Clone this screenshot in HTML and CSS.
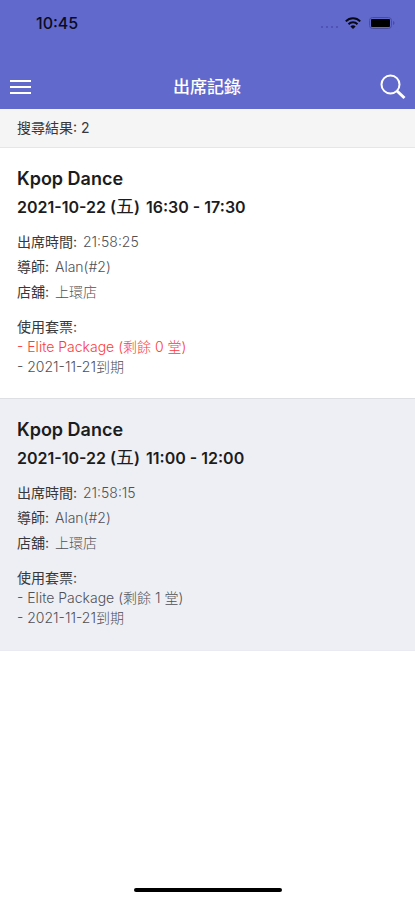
FILE: index.html
```html
<!DOCTYPE html>
<html lang="zh-Hant">
<head>
<meta charset="utf-8">
<meta name="viewport" content="width=device-width, initial-scale=1">
<title>出席記錄</title>
<link rel="stylesheet" href="styles.css">
</head>
<body>
<header class="top">
  <div class="status">
    <span class="clock">10:45</span>
    <div class="status-icons">
      <svg class="signal" width="20" height="4" viewBox="0 0 20 4" aria-hidden="true"><g fill="#4a4fae"><circle cx="2" cy="2" r="1.100"/><circle cx="7" cy="2" r="1.100"/><circle cx="12" cy="2" r="1.100"/><circle cx="17" cy="2" r="1.100"/></g></svg>
      <svg width="16" height="12" viewBox="0 0 16 12" aria-hidden="true"><g fill="none" stroke="#080914" stroke-width="2"><path d="M.8 4.4C4.8.3 11.2.3 15.2 4.4"/><path d="M3.5 7.2c2.5-2.5 6.5-2.5 9 0"/></g><path d="M8 12L5.4 9.4c1.5-1.4 3.7-1.4 5.2 0z" fill="#080914"/></svg>
      <svg width="26" height="12" viewBox="0 0 26 12" aria-hidden="true"><rect x=".5" y=".5" width="22" height="11" rx="3" fill="none" stroke="#484c9c"/><rect x="2" y="2" width="19" height="8" rx="1" fill="#000"/><path d="M24 4c2 .8 2 3.200 0 4z" fill="#484c9c"/></svg>
    </div>
  </div>
  <nav class="nav">
    <button class="icon-button" type="button" aria-label="選單">
      <svg width="22" height="16" viewBox="0 0 22 16" aria-hidden="true"><path d="M0 2h21M0 8h21M0 14h21" stroke="#fff" stroke-width="2"/></svg>
    </button>
    <h1 class="title">出席記錄</h1>
    <button class="icon-button" type="button" aria-label="搜尋">
      <svg width="26" height="26" viewBox="0 0 26 26" aria-hidden="true"><g fill="none" stroke="#fff"><circle cx="10.500" cy="10.500" r="9" stroke-width="2"/><path d="M17 17l7.500 7" stroke-width="3"/></g></svg>
    </button>
  </nav>
</header>
<main>
  <p class="summary">搜尋結果: 2</p>
  <article class="record">
    <h2 class="heading">Kpop Dance</h2>
    <p class="heading heading-date">2021-10-22 (<span class="weekday">五</span>) <span class="time">16:30 - 17:30</span></p>
    <dl class="details">
      <div><dt>出席時間:</dt> <dd>21:58:25</dd></div>
      <div><dt>導師:</dt> <dd>Alan(#2)</dd></div>
      <div><dt>店舖:</dt> <dd>上環店</dd></div>
    </dl>
    <div class="package">
      <p class="package-label">使用套票:</p>
      <p class="used-up">- Elite Package (剩餘 0 堂)</p>
      <p>- 2021-11-21到期</p>
    </div>
  </article>
  <article class="record record-alt">
    <h2 class="heading">Kpop Dance</h2>
    <p class="heading heading-date">2021-10-22 (<span class="weekday">五</span>) <span class="time">11:00 - 12:00</span></p>
    <dl class="details">
      <div><dt>出席時間:</dt> <dd>21:58:15</dd></div>
      <div><dt>導師:</dt> <dd>Alan(#2)</dd></div>
      <div><dt>店舖:</dt> <dd>上環店</dd></div>
    </dl>
    <div class="package">
      <p class="package-label">使用套票:</p>
      <p>- Elite Package (剩餘 1 堂)</p>
      <p>- 2021-11-21到期</p>
    </div>
  </article>
</main>
<footer class="home"><div class="home-bar"></div></footer>
</body>
</html>
```
FILE: styles.css
```css
* {
  box-sizing: border-box;
}

body {
  display: flex;
  flex-direction: column;
  min-height: 100vh;
  margin: 0;
  background: #fff;
  color: #1c1c1e;
  font-family: Inter, "Noto Sans CJK TC", sans-serif;
  font-size: 14px;
}

h1, h2, p, dl, dd {
  margin: 0;
}

.top {
  background: #6269cd;
}

.status {
  display: flex;
  justify-content: space-between;
  align-items: center;
  height: 46px;
  padding: 0 20px 0 36px;
}

.clock {
  color: #0b0c20;
  font-size: 16px;
  font-weight: 500;
}

.status-icons {
  display: flex;
  align-items: center;
  gap: 8px;
}

.signal {
  align-self: flex-end;
  margin-right: -3px;
}

.nav {
  display: flex;
  justify-content: space-between;
  align-items: center;
  height: 44px;
  margin-top: 19px;
  padding: 0 9px 0 8px;
}

.icon-button {
  display: flex;
  width: 26px;
  padding: 0;
  border: 0;
  background: none;
  justify-content: center;
}

.title {
  color: #fff;
  font-size: 17px;
  font-weight: 500;
  line-height: 24px;
}

.summary {
  height: 39px;
  padding: 0 17px;
  border-bottom: 1px solid #e6e6e8;
  background: #f5f5f5;
  color: #38383a;
  line-height: 38px;
}

.record {
  padding: 19px 17px 21px;
  border-bottom: 1px solid #dedfe4;
}

.record-alt {
  padding-bottom: 22px;
  background: #eeeff5;
  border-bottom-color: #e9eaf2;
}

.heading {
  font-size: 18px;
  font-weight: 600;
  line-height: 24px;
}

.heading-date {
  margin-top: 4px;
  font-size: 16px;
}

.weekday {
  font-size: 18px;
  font-weight: 400;
  line-height: 20px;
}

.time {
  margin-left: 2px;
}

.details {
  margin-top: 10px;
  line-height: 25px;
}

.details dt,
.details dd {
  display: inline;
}

.details dt,
.package-label {
  color: #38383a;
}

.details dd {
  margin-left: 2px;
  color: #505054;
  font-weight: 300;
}

.package {
  margin-top: 13px;
  color: #505054;
  font-weight: 300;
  line-height: 20px;
}

.package-label {
  font-weight: 400;
}

.used-up {
  color: #fb3b40;
}

.home {
  margin-top: auto;
  padding-bottom: 8px;
}

.home-bar {
  width: 148px;
  height: 4px;
  margin: 0 auto;
  border-radius: 2px;
  background: #000;
}
```
